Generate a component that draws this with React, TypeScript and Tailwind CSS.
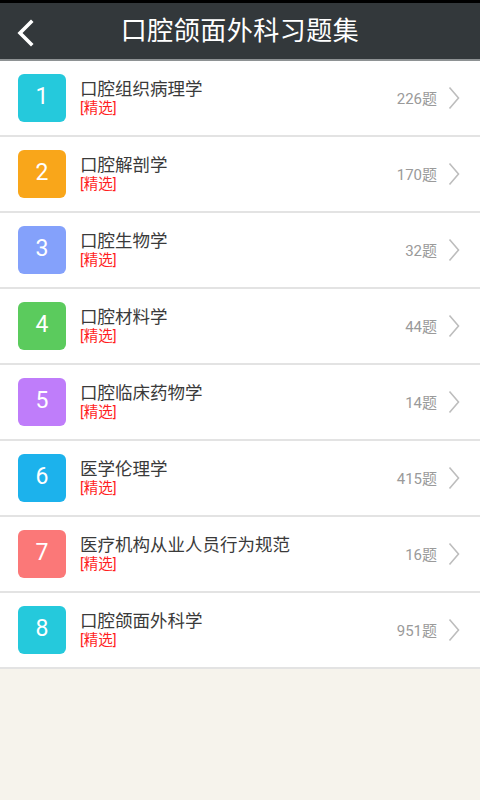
import React from "react";

const items = [
  { n: 1, title: "口腔组织病理学", count: "226题", color: "bg-[#25c9dc]" },
  { n: 2, title: "口腔解剖学", count: "170题", color: "bg-[#f9a61a]" },
  { n: 3, title: "口腔生物学", count: "32题", color: "bg-[#84a1fb]" },
  { n: 4, title: "口腔材料学", count: "44题", color: "bg-[#5bcb5d]" },
  { n: 5, title: "口腔临床药物学", count: "14题", color: "bg-[#bf7dfa]" },
  { n: 6, title: "医学伦理学", count: "415题", color: "bg-[#1cb2ec]" },
  { n: 7, title: "医疗机构从业人员行为规范", count: "16题", color: "bg-[#fb7878]" },
  { n: 8, title: "口腔颌面外科学", count: "951题", color: "bg-[#25c9dc]" },
];

const font = { fontFamily: '"Roboto", "Noto Sans CJK SC", sans-serif' };

export default function App() {
  return (
    <div className="w-[480px] h-[800px] bg-[#f6f3ec] flex flex-col" style={font}>
      <div className="h-[3px] bg-black" />
      <div className="h-[56px] bg-[#33383b] relative flex items-center justify-center">
        <svg className="absolute left-[15px] top-[16px]" width="20" height="28" viewBox="0 0 20 28">
          <path d="M16 3 L5 14 L16 25" fill="none" stroke="#ffffff" strokeWidth="3.6" strokeLinecap="square" />
        </svg>
        <span className="text-white text-[26px] leading-none tracking-[0.5px]">口腔颌面外科习题集</span>
      </div>
      <div className="h-[2px] bg-[#8e9294]" />
      <div className="bg-white flex flex-col">
        {items.map((it) => (
          <div key={it.n} className="h-[76px] border-b-2 border-[#e3e3e3] flex items-center pl-[18px] pr-[20px] pb-[1px]">
            <div className={`w-[48px] h-[48px] rounded-[6px] ${it.color} flex items-center justify-center text-white text-[23px]`}>
              {it.n}
            </div>
            <div className="ml-[14px] flex flex-col flex-1 mt-[1px]">
              <span className="text-[17.5px] leading-[22px] text-[#3a3a3a]">{it.title}</span>
              <span className="text-[14.5px] leading-[18px] text-[#ff1f1f]">[精选]</span>
            </div>
            <span className="text-[15px] text-[#9a9a9a] mt-[4px]">{it.count}</span>
            <svg className="ml-[11px] mt-[1px]" width="12" height="24" viewBox="0 0 12 24">
              <path d="M1.5 1.5 L10.5 12 L1.5 22.5" fill="none" stroke="#bdbdbd" strokeWidth="1.6" />
            </svg>
          </div>
        ))}
      </div>
    </div>
  );
}
